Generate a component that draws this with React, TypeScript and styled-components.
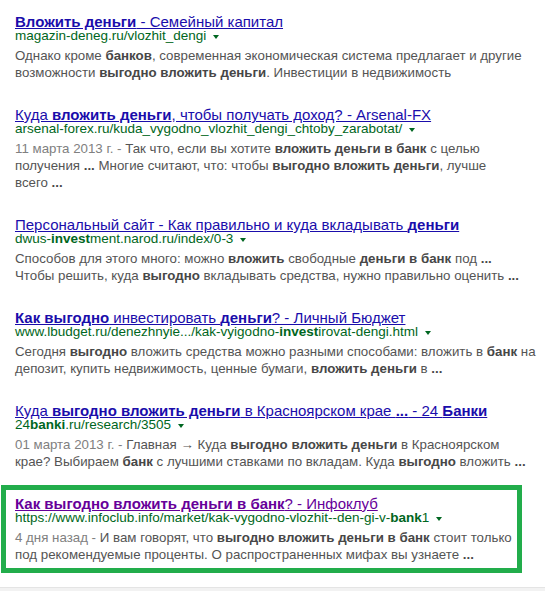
import React from "react";
import styled, { createGlobalStyle } from "styled-components";

const Global = createGlobalStyle`
  html, body { margin: 0; padding: 0; background: #ffffff; }
  body { font-family: "Liberation Sans", Arial, sans-serif; }
`;

const Page = styled.div`
  width: 545px;
  height: 591px;
  overflow: hidden;
  display: flex;
  flex-direction: column;
`;

const List = styled.div`
  padding: 14px 0 0 15px;
  display: flex;
  flex-direction: column;
  gap: 26px;
`;

const Highlight = styled.div`
  box-sizing: border-box;
  width: 521px;
  margin: -11px 0 0 -14px;
  padding: 6px 0 5px 9px;
  border: 5px solid #22ad4b;
`;

const Result = styled.div`
  display: flex;
  flex-direction: column;
  align-items: flex-start;
`;

const Title = styled.a<{ $visited?: boolean }>`
  display: block;
  font-size: 15px;
  line-height: 16px;
  color: ${(p) => (p.$visited ? "#660099" : "#1a0dab")};
  text-decoration: underline;
  white-space: nowrap;
  cursor: pointer;
  b { font-weight: bold; }
`;

const UrlRow = styled.div`
  display: flex;
  align-items: center;
  font-size: 13.5px;
  line-height: 12px;
  color: #006621;
  white-space: nowrap;
  b { font-weight: bold; }
`;

const Arrow = styled.span`
  display: inline-block;
  width: 0;
  height: 0;
  margin: 1px 0 0 7px;
  border-top: 4px solid #006621;
  border-left: 3.5px solid transparent;
  border-right: 3.5px solid transparent;
`;

const Snippet = styled.div`
  margin-top: 5px;
  font-size: 13.3px;
  line-height: 17px;
  color: #545454;
  b { font-weight: bold; color: #474747; }
`;

const Line = styled.div`
  white-space: nowrap;
`;

const DateText = styled.span`
  color: #808080;
`;

const Footer = styled.div`
  margin-top: auto;
  height: 3px;
  border-top: 1px solid #e4e4e4;
  background: #f2f2f2;
`;

type Item = {
  title: string;
  url: string;
  date?: string;
  lines: string[];
  visited?: boolean;
  highlighted?: boolean;
};

const items: Item[] = [
  {
    title: "**Вложить деньги** - Семейный капитал",
    url: "magazin-deneg.ru/vlozhit_dengi",
    lines: [
      "Однако кроме **банков**, современная экономическая система предлагает и другие",
      "возможности **выгодно вложить деньги**. Инвестиции в недвижимость",
    ],
  },
  {
    title: "Куда **вложить деньги**, чтобы получать доход? - Arsenal-FX",
    url: "arsenal-forex.ru/kuda_vygodno_vlozhit_dengi_chtoby_zarabotat/",
    date: "11 марта 2013 г. - ",
    lines: [
      "Так что, если вы хотите **вложить деньги в банк** с целью",
      "получения **...** Многие считают, что: чтобы **выгодно вложить деньги**, лучше",
      "всего **...**",
    ],
  },
  {
    title: "Персональный сайт - Как правильно и куда вкладывать **деньги**",
    url: "dwus-**invest**ment.narod.ru/index/0-3",
    lines: [
      "Способов для этого много: можно **вложить** свободные **деньги в банк** под **...**",
      "Чтобы решить, куда **выгодно** вкладывать средства, нужно правильно оценить **...**",
    ],
  },
  {
    title: "**Как выгодно** инвестировать **деньги**? - Личный Бюджет",
    url: "www.lbudget.ru/denezhnyie.../kak-vyigodno-**invest**irovat-dengi.html",
    lines: [
      "Сегодня **выгодно** вложить средства можно разными способами: вложить в **банк** на",
      "депозит, купить недвижимость, ценные бумаги, **вложить деньги** в **...**",
    ],
  },
  {
    title: "Куда **выгодно вложить деньги** в Красноярском крае **...** - 24 **Банки**",
    url: "24**banki**.ru/research/3505",
    date: "01 марта 2013 г. - ",
    lines: [
      "Главная → Куда **выгодно вложить деньги** в Красноярском",
      "крае? Выбираем **банк** с лучшими ставками по вкладам. Куда **выгодно** вложить **...**",
    ],
  },
  {
    title: "**Как выгодно вложить деньги в банк**? - Инфоклуб",
    url: "https://www.infoclub.info/market/kak-vygodno-vlozhit--den-gi-v-**bank**1",
    date: "4 дня назад - ",
    lines: [
      "И вам говорят, что **выгодно вложить деньги в банк** стоит только",
      "под рекомендуемые проценты. О распространенных мифах вы узнаете **...**",
    ],
    visited: true,
    highlighted: true,
  },
];

function Rich({ text }: { text: string }) {
  const parts = text.split("**");
  return (
    <>
      {parts.map((p, i) => (i % 2 === 1 ? <b key={i}>{p}</b> : <React.Fragment key={i}>{p}</React.Fragment>))}
    </>
  );
}

function SearchResult({ item }: { item: Item }) {
  return (
    <Result>
      <Title $visited={item.visited}>
        <Rich text={item.title} />
      </Title>
      <UrlRow>
        <span>
          <Rich text={item.url} />
        </span>
        <Arrow />
      </UrlRow>
      <Snippet>
        {item.lines.map((l, i) => (
          <Line key={i}>
            {i === 0 && item.date ? <DateText>{item.date}</DateText> : null}
            <Rich text={l} />
          </Line>
        ))}
      </Snippet>
    </Result>
  );
}

export default function App() {
  return (
    <Page>
      <Global />
      <List>
        {items.map((item, i) =>
          item.highlighted ? (
            <Highlight key={i}>
              <SearchResult item={item} />
            </Highlight>
          ) : (
            <SearchResult key={i} item={item} />
          )
        )}
      </List>
      <Footer />
    </Page>
  );
}
